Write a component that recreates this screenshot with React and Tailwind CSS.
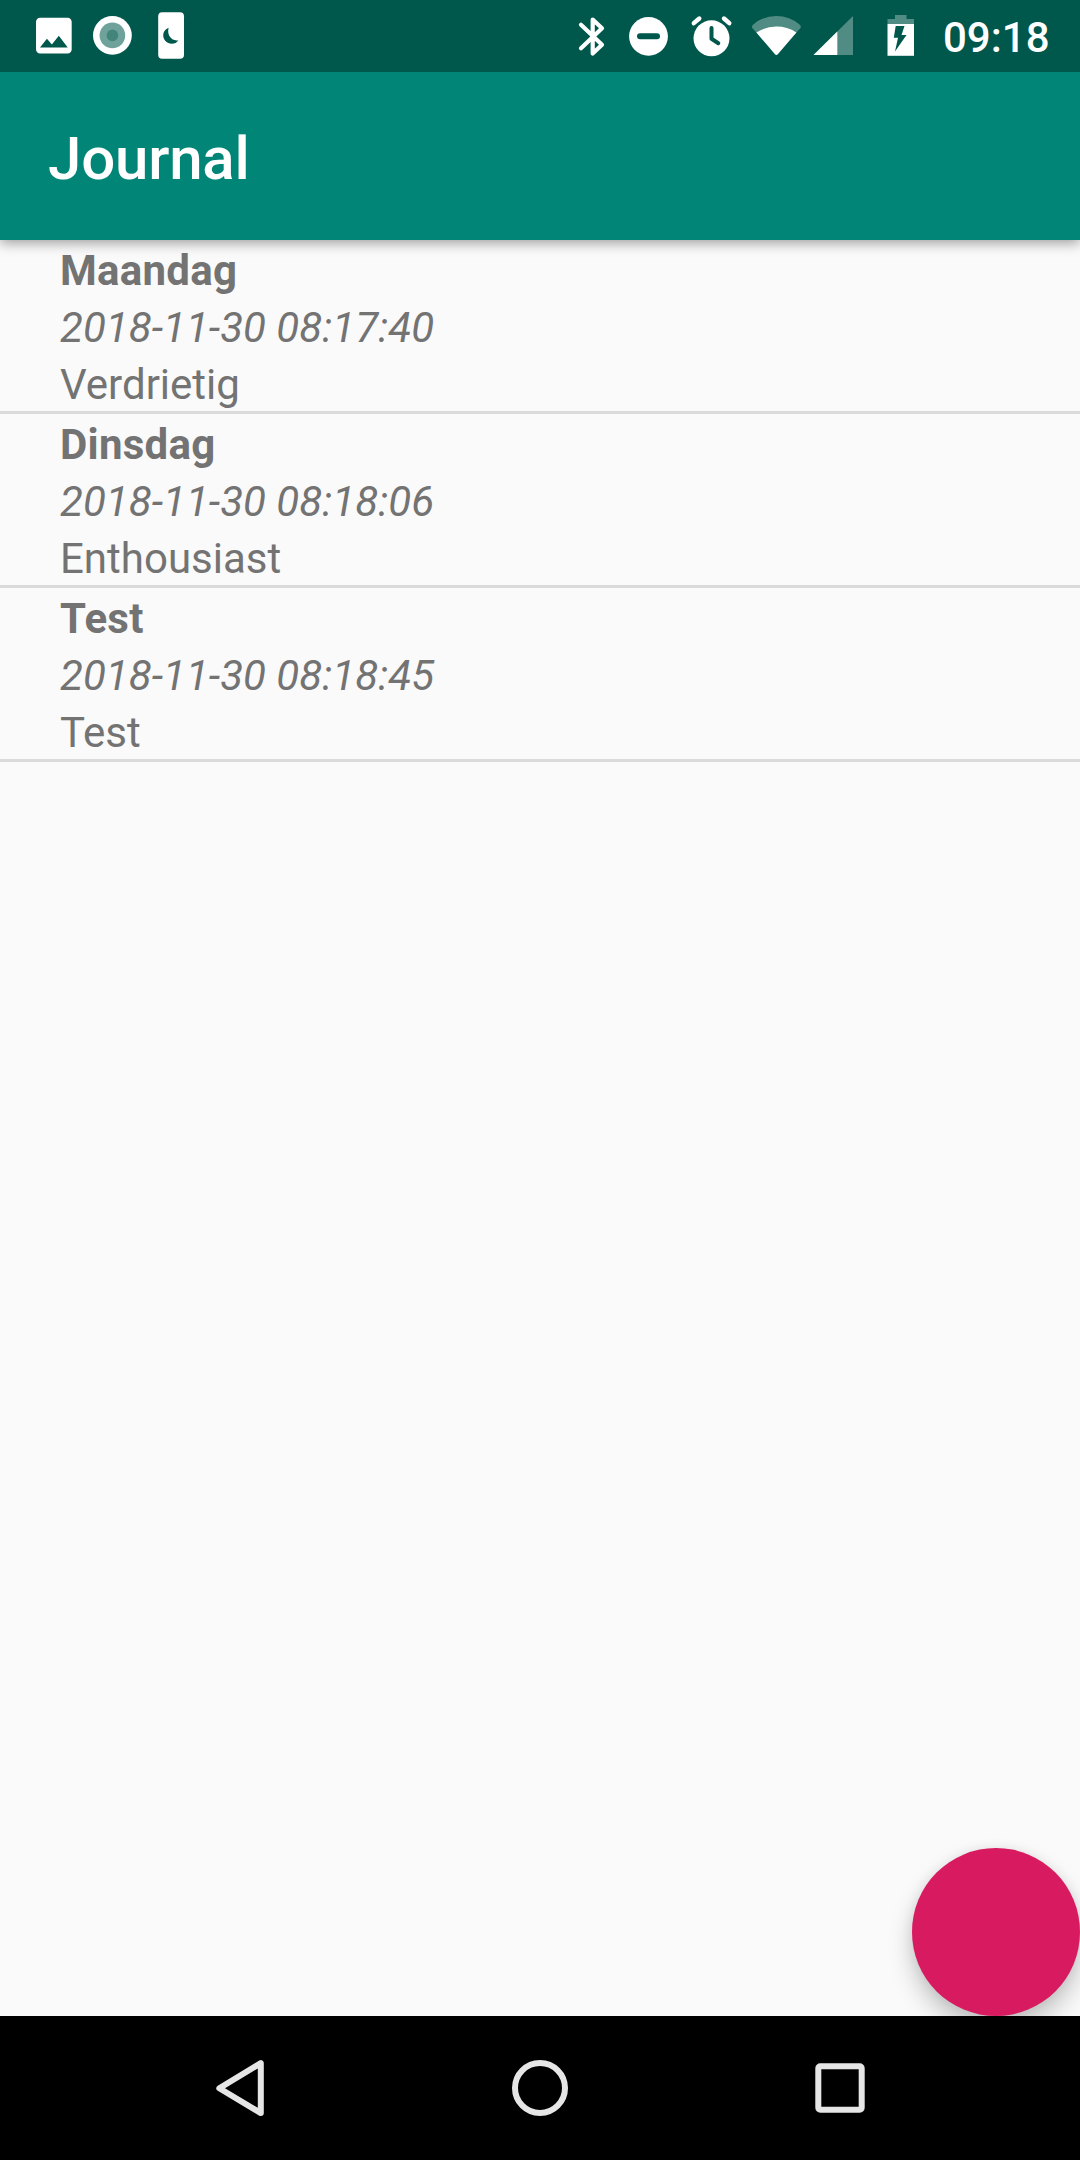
import React from "react";

const entries = [
  { title: "Maandag", time: "2018-11-30 08:17:40", mood: "Verdrietig" },
  { title: "Dinsdag", time: "2018-11-30 08:18:06", mood: "Enthousiast" },
  { title: "Test", time: "2018-11-30 08:18:45", mood: "Test" },
];

function BarIcon({ x, w, children }) {
  return (
    <svg width={w} height="72" viewBox={`${x} 0 ${w} 72`} fill="#fff" className="block shrink-0">
      {children}
    </svg>
  );
}

function StatusBar() {
  return (
    <header className="relative z-20 flex h-[72px] shrink-0 items-center justify-between bg-[#00574b] pl-[30px]">
      <div className="flex">
        <BarIcon x={30} w={54}>
          <path
            transform="translate(30.1 11.9) scale(1.98)"
            d="M21 19V5c0-1.1-.9-2-2-2H5c-1.1 0-2 .9-2 2v14c0 1.1.9 2 2 2h14c1.1 0 2-.9 2-2zM8.5 13.5l2.5 3.01L14.5 12l4.5 6H5l3.5-4.5z"
          />
        </BarIcon>
        <BarIcon x={84} w={56}>
          <circle cx="112.4" cy="35.4" r="19.4" />
          <circle cx="112.4" cy="35.4" r="12.8" fill="#6fa29b" />
          <circle cx="112.4" cy="35.4" r="5.8" fill="#43857b" />
        </BarIcon>
        <BarIcon x={140} w={60}>
          <rect x="158.2" y="12.3" width="25.8" height="46.5" rx="4" />
          <path
            fill="#00574b"
            d="M168.6 27.8C165.3 29 163.2 32 163.2 35.3C163.2 40 167 43.8 171.7 43.8C174.6 43.8 177 42.5 178.3 40.2C172.5 41.5 166.5 36 168.6 27.8Z"
          />
        </BarIcon>
      </div>
      <div className="flex items-center">
        <BarIcon x={570} w={50}>
          <path
            d="M581 24.8L602 44.7L592.7 53.5V19.5L602 28.2L581 48.2"
            fill="none"
            stroke="#fff"
            strokeWidth="4.2"
            strokeLinecap="round"
            strokeLinejoin="round"
          />
        </BarIcon>
        <BarIcon x={620} w={60}>
          <circle cx="648.5" cy="36.4" r="19.4" />
          <rect x="637" y="33.2" width="23" height="6" rx="3" fill="#00574b" />
        </BarIcon>
        <BarIcon x={680} w={64}>
          <circle cx="711.5" cy="38.3" r="18" />
          <path d="M693.8 23.2L699.3 18.5M724 18.5L729.3 23.2" stroke="#fff" strokeWidth="4.4" strokeLinecap="round" />
          <path
            d="M711.5 28V38.8L718.3 43.2"
            fill="none"
            stroke="#00574b"
            strokeWidth="4"
            strokeLinecap="round"
            strokeLinejoin="round"
          />
        </BarIcon>
        <BarIcon x={744} w={64}>
          <path
            fill="#508c83"
            d="M776.4 55L752.3 28Q751.4 26 753 24.7Q763 16 776.4 16T799.8 24.7Q801.4 26 800.5 28Z"
          />
          <path d="M756.4 32.5Q765.5 26.6 776.4 26.6T796.4 32.5L777.6 54.6Q776.4 55.4 775.2 54.6Z" />
        </BarIcon>
        <BarIcon x={808} w={52}>
          <path fill="#508c83" d="M813.5 55L853 16V55Z" />
          <path d="M813.5 55L837.3 31.5V55Z" />
        </BarIcon>
        <BarIcon x={860} w={83}>
          <path fill="#508c83" d="M887.5 24V19H895V15H906.5V19H914V24Z" />
          <path d="M887.5 24H914V55.8H887.5Z" />
          <path fill="#00574b" d="M895.7 26H904.5L901.5 35H906.5L895 51.5L898 37.7H893.8Z" />
        </BarIcon>
        <span className="w-[137px] pt-[3px] text-[42px] leading-[69px] font-medium text-white">09:18</span>
      </div>
    </header>
  );
}

function Entry({ title, time, mood }) {
  return (
    <li className="h-[174px] border-b-[3px] border-[#dadada] pt-[2px] pl-[60px] text-[42px] leading-[57px] text-[#737373]">
      <p className="font-bold tracking-[0.25px]">{title}</p>
      <p className="tracking-[0.04px] italic">{time}</p>
      <p>{mood}</p>
    </li>
  );
}

function NavBar() {
  return (
    <nav className="flex h-[144px] shrink-0 items-center justify-around bg-black px-[90px]">
      <svg width="100" height="100" viewBox="0 0 100 100" fill="none" stroke="#e6e6e6" strokeWidth="6" strokeLinejoin="round">
        <path d="M29.3 50.2L70.8 25.1V75.1Z" />
      </svg>
      <svg width="100" height="100" viewBox="0 0 100 100" fill="none" stroke="#e6e6e6" strokeWidth="6">
        <circle cx="50" cy="50" r="25" />
      </svg>
      <svg width="100" height="100" viewBox="0 0 100 100" fill="none" stroke="#e6e6e6" strokeWidth="6">
        <rect x="28.3" y="28.3" width="43.4" height="43.4" rx="2" />
      </svg>
    </nav>
  );
}

export default function App() {
  return (
    <div className="flex h-[2160px] w-[1080px] flex-col overflow-hidden bg-[#fafafa] font-['Roboto',sans-serif]">
      <StatusBar />
      <div className="z-10 flex h-[168px] shrink-0 items-center bg-[#008577] pt-[5px] pl-[48px] shadow-[0_3px_12px_rgba(0,0,0,0.38)]">
        <h1 className="text-[60px] leading-[70px] font-medium tracking-[-0.2px] text-white">Journal</h1>
      </div>
      <main className="flex flex-1 flex-col justify-between overflow-hidden">
        <ul>
          {entries.map((e) => (
            <Entry key={e.time} {...e} />
          ))}
        </ul>
        <button
          aria-label="Nieuw"
          className="size-[168px] self-end rounded-full bg-[#d81b60] shadow-[0_14px_24px_rgba(0,0,0,0.22),0_0_12px_rgba(0,0,0,0.07)]"
        />
      </main>
      <NavBar />
    </div>
  );
}
